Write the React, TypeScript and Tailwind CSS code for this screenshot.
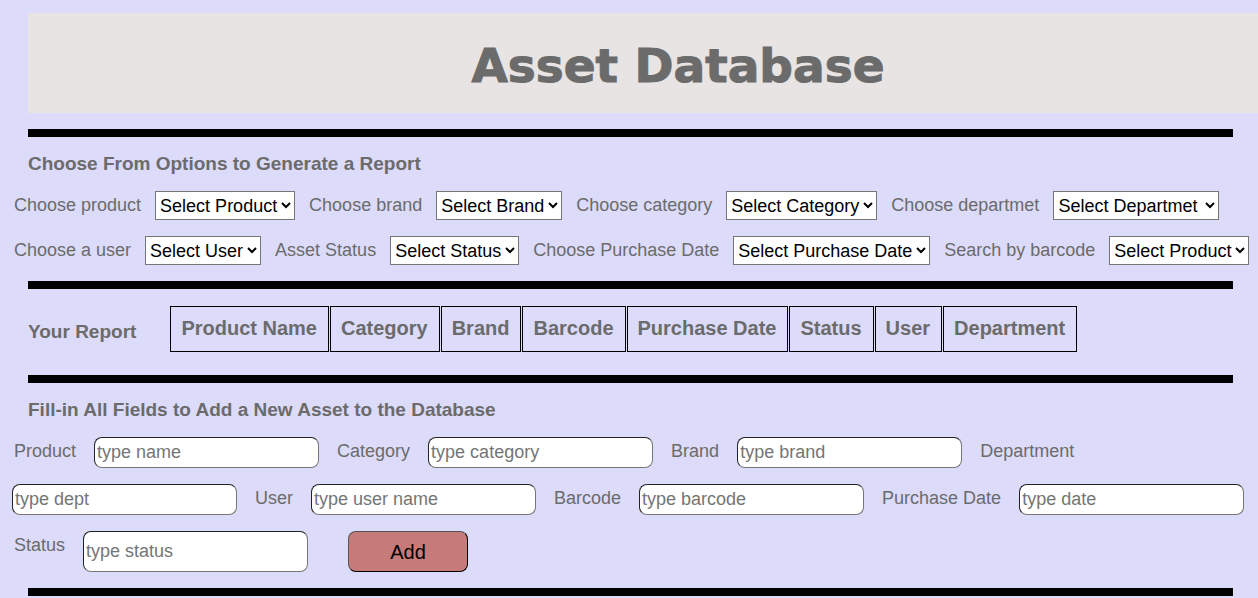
import { Fragment } from "react";

type Field = { id: string; label: string; text: string; wide?: boolean };

const filters: Field[] = [
  { id: "filter-product", label: "Choose product", text: "Select Product" },
  { id: "filter-brand", label: "Choose brand", text: "Select Brand" },
  { id: "filter-category", label: "Choose category", text: "Select Category" },
  { id: "filter-department", label: "Choose departmet", text: "Select Departmet", wide: true },
  { id: "filter-user", label: "Choose a user", text: "Select User" },
  { id: "filter-status", label: "Asset Status", text: "Select Status" },
  { id: "filter-date", label: "Choose Purchase Date", text: "Select Purchase Date" },
  { id: "filter-barcode", label: "Search by barcode", text: "Select Product" },
];

const columns = [
  "Product Name",
  "Category",
  "Brand",
  "Barcode",
  "Purchase Date",
  "Status",
  "User",
  "Department",
];

const fields: Field[] = [
  { id: "product", label: "Product", text: "type name" },
  { id: "category", label: "Category", text: "type category" },
  { id: "brand", label: "Brand", text: "type brand" },
  { id: "department", label: "Department", text: "type dept" },
  { id: "user", label: "User", text: "type user name" },
  { id: "barcode", label: "Barcode", text: "type barcode" },
  { id: "date", label: "Purchase Date", text: "type date" },
  { id: "status", label: "Status", text: "type status" },
];

function Divider() {
  return <hr className="mr-[25px] ml-7 h-2 border-0 bg-black" />;
}

function Label({ field }: { field: Field }) {
  return (
    <label htmlFor={field.id} className="px-0.5 leading-[28px]">
      {field.label}
    </label>
  );
}

export default function App() {
  return (
    <main className="min-h-screen overflow-hidden bg-[#dcdbfa] pt-[13px] font-['Liberation_Sans',Arial,sans-serif] text-[18px] text-[#6b6b6b]">
      <header className="mb-4 ml-7 bg-[#e7e4e3] pt-[23px] pb-[17px] pl-[70px]">
        <h1 className="text-center font-['Arial_Black','DejaVu_Sans',sans-serif] text-[47px] leading-[60px] font-black whitespace-nowrap [-webkit-text-stroke:1px_#6b6b6b]">
          Asset Database
        </h1>
      </header>
      <Divider />

      <section>
        <h2 className="my-4 ml-7 text-[19px] leading-[22px] font-bold">
          Choose From Options to Generate a Report
        </h2>
        <form className="mb-4 flex flex-wrap gap-x-3 gap-y-4 pr-1 pl-3">
          {filters.map((f) => (
            <Fragment key={f.id}>
              <Label field={f} />
              <select
                id={f.id}
                className={
                  f.wide
                    ? "h-[29px] w-[166px] border border-[#767676] bg-white text-black"
                    : "h-[29px] border border-[#767676] bg-white text-black"
                }
              >
                <option>{f.text}</option>
              </select>
            </Fragment>
          ))}
        </form>
      </section>
      <Divider />

      <section className="flex items-center gap-[33px] pt-4 pb-[22px] pl-7">
        <h2 className="pt-[6px] text-[19px] leading-[22px] font-bold whitespace-nowrap">
          Your Report
        </h2>
        <table className="border-separate border-spacing-px text-[20px] leading-6">
          <thead>
            <tr>
              {columns.map((c) => (
                <th
                  key={c}
                  scope="col"
                  className="border border-black pt-[9px] pr-[11px] pb-[11px] pl-[10px] font-bold whitespace-nowrap"
                >
                  {c}
                </th>
              ))}
            </tr>
          </thead>
        </table>
      </section>
      <Divider />

      <section>
        <h2 className="my-4 ml-7 text-[19px] leading-[22px] font-bold">
          Fill-in All Fields to Add a New Asset to the Database
        </h2>
        <form className="mb-4 flex flex-wrap gap-4 pr-1 pl-3">
          {fields.map((f) => (
            <Fragment key={f.id}>
              <Label field={f} />
              <input
                id={f.id}
                type="text"
                placeholder={f.text}
                className="min-h-[31px] w-[225px] rounded-[8px] border border-t-[#222222] border-r-[#767676] border-b-[#767676] border-l-[#222222] bg-white px-0.5 text-black placeholder:text-[#757575]"
              />
            </Fragment>
          ))}
          <button
            type="button"
            className="ml-6 h-[41px] w-[120px] rounded-[8px] border border-t-[#555555] border-r-black border-b-black border-l-[#555555] bg-[#c77a7a] text-[20px] text-black"
          >
            Add
          </button>
        </form>
      </section>
      <Divider />
    </main>
  );
}
